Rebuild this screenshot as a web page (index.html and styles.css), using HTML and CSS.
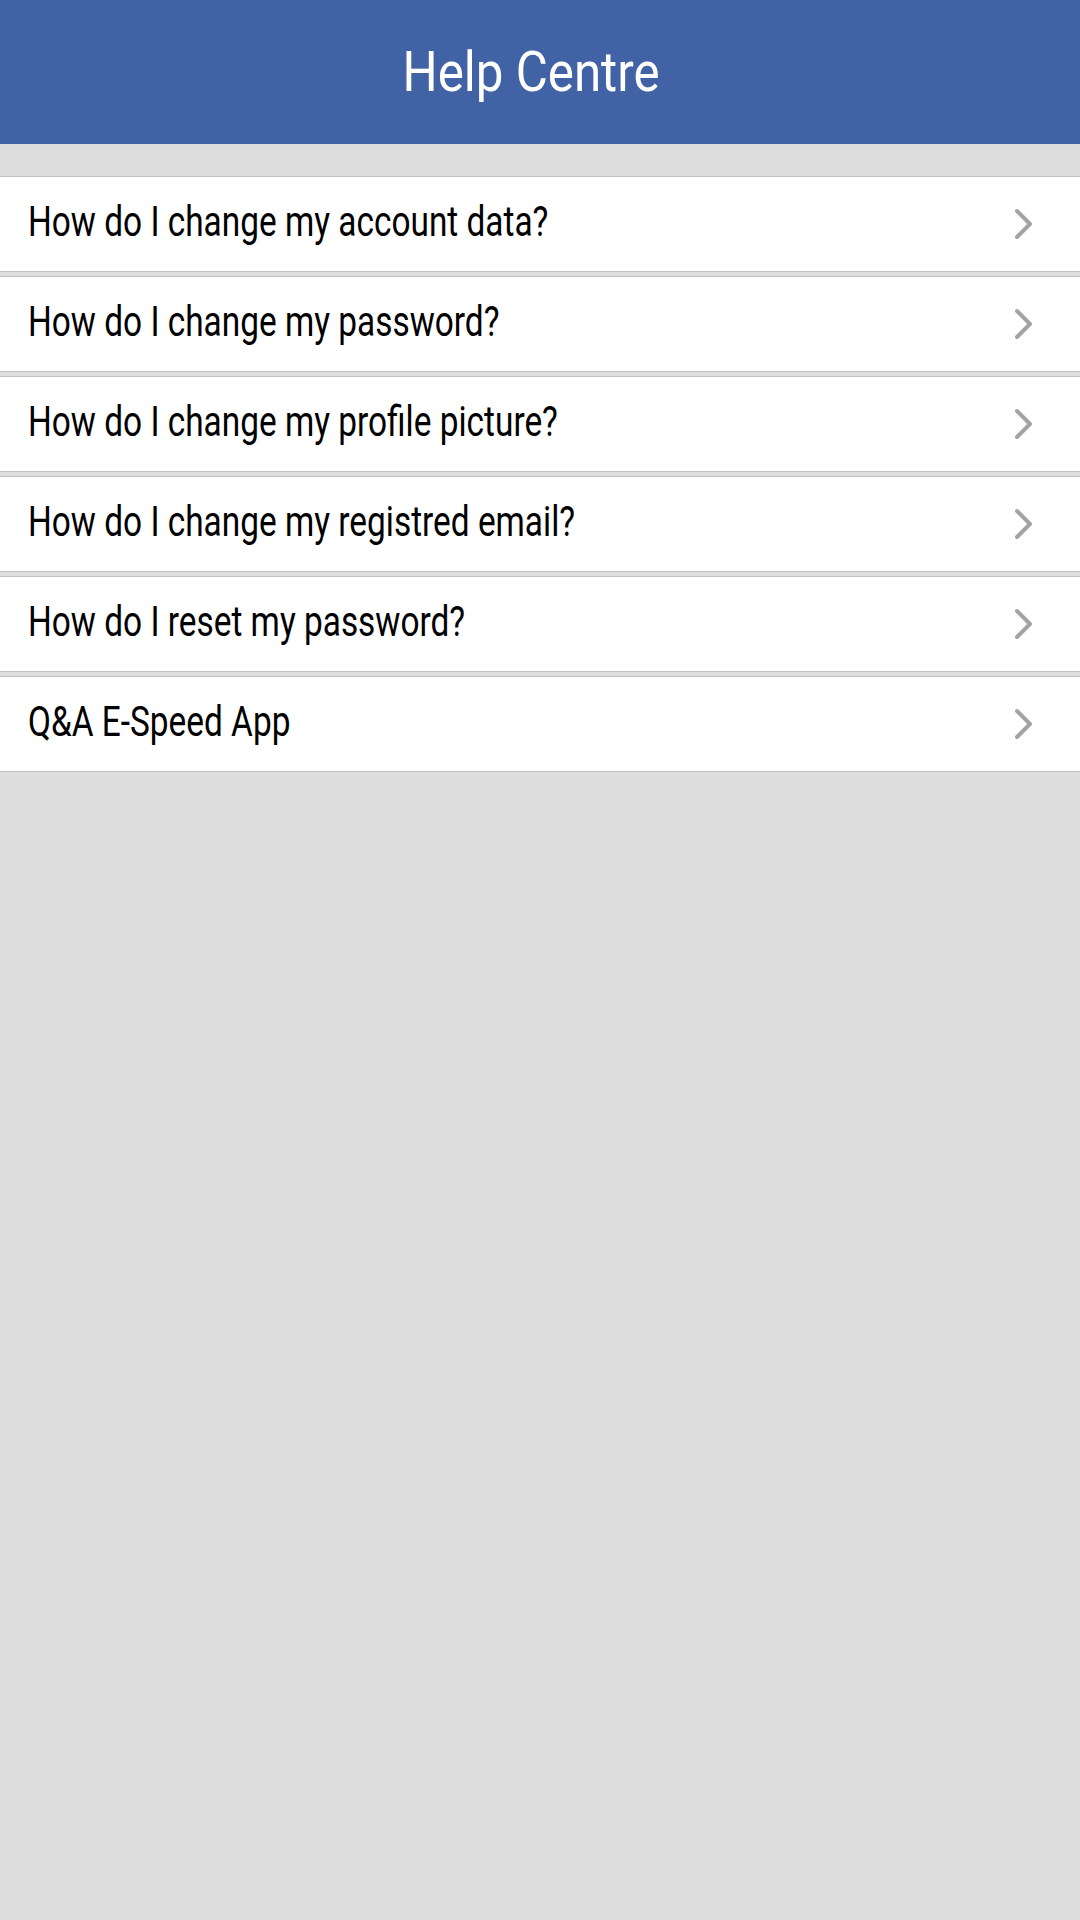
FILE: index.html
```html
<!DOCTYPE html>
<html lang="en">
<head>
<meta charset="utf-8">
<title>Help Centre</title>
<link rel="stylesheet" href="styles.css">
</head>
<body>
<header class="topbar">
  <h1 class="topbar-title">Help Centre</h1>
</header>
<main class="faq">
  <ul class="faq-list">
    <li class="faq-item"><span class="faq-text">How do I change my account data?</span><svg class="chev" viewBox="0 0 20 32" width="20" height="32"><path d="M3 3 L16 16 L3 29" /></svg></li>
    <li class="faq-item"><span class="faq-text">How do I change my password?</span><svg class="chev" viewBox="0 0 20 32" width="20" height="32"><path d="M3 3 L16 16 L3 29" /></svg></li>
    <li class="faq-item"><span class="faq-text">How do I change my profile picture?</span><svg class="chev" viewBox="0 0 20 32" width="20" height="32"><path d="M3 3 L16 16 L3 29" /></svg></li>
    <li class="faq-item"><span class="faq-text">How do I change my registred email?</span><svg class="chev" viewBox="0 0 20 32" width="20" height="32"><path d="M3 3 L16 16 L3 29" /></svg></li>
    <li class="faq-item"><span class="faq-text">How do I reset my password?</span><svg class="chev" viewBox="0 0 20 32" width="20" height="32"><path d="M3 3 L16 16 L3 29" /></svg></li>
    <li class="faq-item"><span class="faq-text">Q&amp;A E-Speed App</span><svg class="chev" viewBox="0 0 20 32" width="20" height="32"><path d="M3 3 L16 16 L3 29" /></svg></li>
  </ul>
</main>
</body>
</html>
```
FILE: styles.css
```css
html, body {
  margin: 0;
  padding: 0;
}
body {
  width: 1080px;
  min-height: 1920px;
  background: #dddddd;
  font-family: Roboto, "Liberation Sans", sans-serif;
}
.topbar {
  box-sizing: border-box;
  height: 144px;
  background: #4162a5;
  display: flex;
  align-items: center;
  justify-content: center;
  padding-right: 17px;
}
.topbar-title {
  margin: 0;
  color: #ffffff;
  font-weight: normal;
  font-size: 56px;
  line-height: 1;
  transform: scaleX(0.88);
}
.faq {
  padding-top: 32px;
}
.faq-list {
  list-style: none;
  margin: 0;
  padding: 0;
  display: flex;
  flex-direction: column;
  gap: 4px;
}
.faq-item {
  box-sizing: border-box;
  height: 96px;
  background: #ffffff;
  border-top: 1px solid #c2c2c2;
  border-bottom: 1px solid #c2c2c2;
  display: flex;
  align-items: center;
  justify-content: space-between;
  padding: 0 46px 5px 28px;
}
.faq-text {
  font-size: 42px;
  color: #000000;
  transform: scaleX(0.795);
  transform-origin: left center;
}
.chev {
  display: block;
  margin-top: 5px;
}
.chev path {
  fill: none;
  stroke: #a3a3a3;
  stroke-width: 4;
  stroke-linecap: round;
  stroke-linejoin: round;
}
```
